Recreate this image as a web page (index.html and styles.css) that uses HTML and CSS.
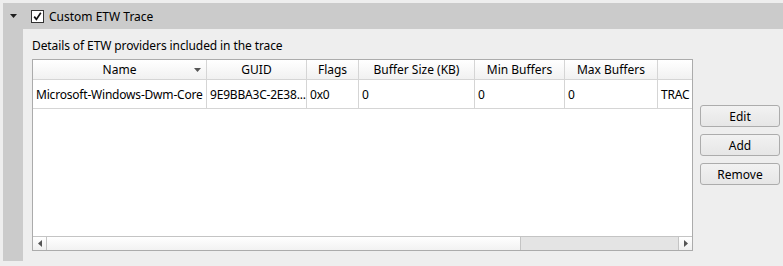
FILE: index.html
```html
<!DOCTYPE html>
<html lang="en">
<head>
    <meta charset="UTF-8">
    <title>Custom ETW Trace</title>
    <link rel="stylesheet" href="styles.css">
</head>
<body>

<div class="group">
    <div class="group-header">
        <svg class="expander" width="7" height="4" viewBox="0 0 7 4"><path d="M0 0h7L3.5 4z" fill="#1e1e1e"/></svg>
        <span class="check">
            <svg width="11" height="11" viewBox="0 0 11 11"><path d="M2.2 5.6 4.4 8.4 8.8 1.8" fill="none" stroke="#111" stroke-width="1.7"/></svg>
        </span>
        <span class="group-title">Custom ETW Trace</span>
    </div>

    <div class="group-body">
        <p class="caption">Details of ETW providers included in the trace</p>
        <div class="row">
            <div class="grid">
                <div class="grid-scroll">
                    <table>
                        <thead>
                            <tr>
                                <th class="c-name">Name <svg class="sort" width="7" height="4" viewBox="0 0 7 4"><path d="M0 0h7L3.5 4z" fill="#555"/></svg></th>
                                <th class="c-guid">GUID</th>
                                <th class="c-flags">Flags</th>
                                <th class="c-buf">Buffer Size (KB)</th>
                                <th class="c-min">Min Buffers</th>
                                <th class="c-max">Max Buffers</th>
                                <th class="c-level"></th>
                            </tr>
                        </thead>
                        <tbody>
                            <tr>
                                <td>Microsoft-Windows-Dwm-Core</td>
                                <td>9E9BBA3C-2E38...</td>
                                <td>0x0</td>
                                <td>0</td>
                                <td>0</td>
                                <td>0</td>
                                <td>TRAC</td>
                            </tr>
                        </tbody>
                    </table>
                </div>
                <div class="hscroll">
                    <div class="sb-btn"><svg width="4" height="7" viewBox="0 0 4 7"><path d="M4 0v7L0 3.5z" fill="#555"/></svg></div>
                    <div class="sb-thumb"></div>
                    <div class="sb-track"></div>
                    <div class="sb-btn sb-right"><svg width="4" height="7" viewBox="0 0 4 7"><path d="M0 0v7l4-3.5z" fill="#555"/></svg></div>
                </div>
            </div>
            <div class="buttons">
                <button>Edit</button>
                <button>Add</button>
                <button>Remove</button>
            </div>
        </div>
    </div>
</div>

</body>
</html>
```

FILE: styles.css
```css
body {
    margin: 0;
    padding: 3px 0 0 3px;
    background-color: #eeeeee;
    font-family: "Noto Sans", "Open Sans", Arial, sans-serif;
    font-size: 12px;
    color: #000;
}
.group {
    background-color: #cbcbcb;
    height: 258px;
    display: flex;
    flex-direction: column;
}
.group-header {
    height: 27px;
    display: flex;
    align-items: center;
}
.expander {
    margin: 0 0 0 7px;
}
.check {
    width: 11px;
    height: 11px;
    margin-left: 14px;
    border: 1px solid #333;
    background: white;
    display: flex;
}
.group-title {
    margin-left: 5px;
}
.group-body {
    flex: 1;
    margin-left: 20px;
    background-color: #eeeeee;
    padding: 0 0 10px 9px;
    display: flex;
    flex-direction: column;
}
.caption {
    margin: 0;
    height: 30px;
    line-height: 34px;
    letter-spacing: -0.1px;
}
.row {
    display: flex;
    flex: 1;
}
.grid {
    width: 659px;
    height: 190px;
    border: 1px solid #ababab;
    background: white;
    display: flex;
    flex-direction: column;
}
.grid-scroll {
    flex: 1;
    overflow: hidden;
}
table {
    border-collapse: separate;
    border-spacing: 0;
    table-layout: fixed;
    width: 725px;
}
th, td {
    border-right: 1px solid #d5d5d5;
    border-bottom: 1px solid #d5d5d5;
    padding: 0 3px;
    white-space: nowrap;
    overflow: hidden;
    font-weight: normal;
}
th {
    height: 19px;
    text-align: center;
    background: linear-gradient(#ffffff, #f1f1f1);
    position: relative;
}
td {
    height: 28px;
    text-align: left;
    letter-spacing: -0.2px;
}
.c-name { width: 167px; }
.c-guid { width: 93px; }
.c-flags { width: 45px; }
.c-buf { width: 109px; }
.c-min { width: 83px; }
.c-max { width: 86px; }
.c-level { width: 93px; }
.sort {
    position: absolute;
    right: 5px;
    top: 8px;
}
.hscroll {
    height: 13px;
    border-top: 1px solid #c4c4c4;
    display: flex;
}
.sb-btn {
    width: 13px;
    border-right: 1px solid #c4c4c4;
    display: flex;
    align-items: center;
    justify-content: center;
    background: linear-gradient(#ffffff, #f0f0f0);
}
.sb-right {
    border-right: none;
    border-left: 1px solid #c4c4c4;
}
.sb-thumb {
    width: 473px;
    border-right: 1px solid #c4c4c4;
    background: linear-gradient(#ffffff, #f2f2f2);
}
.sb-track {
    flex: 1;
    background: #e4e4e4;
}
.buttons {
    margin: 46px 0 0 7px;
    display: flex;
    flex-direction: column;
    gap: 7px;
}
button {
    width: 80px;
    height: 22px;
    font-family: inherit;
    font-size: 12px;
    border: 1px solid #acacac;
    border-radius: 3px;
    background: linear-gradient(#f2f2f2, #e6e6e6);
    padding: 0;
}
```
